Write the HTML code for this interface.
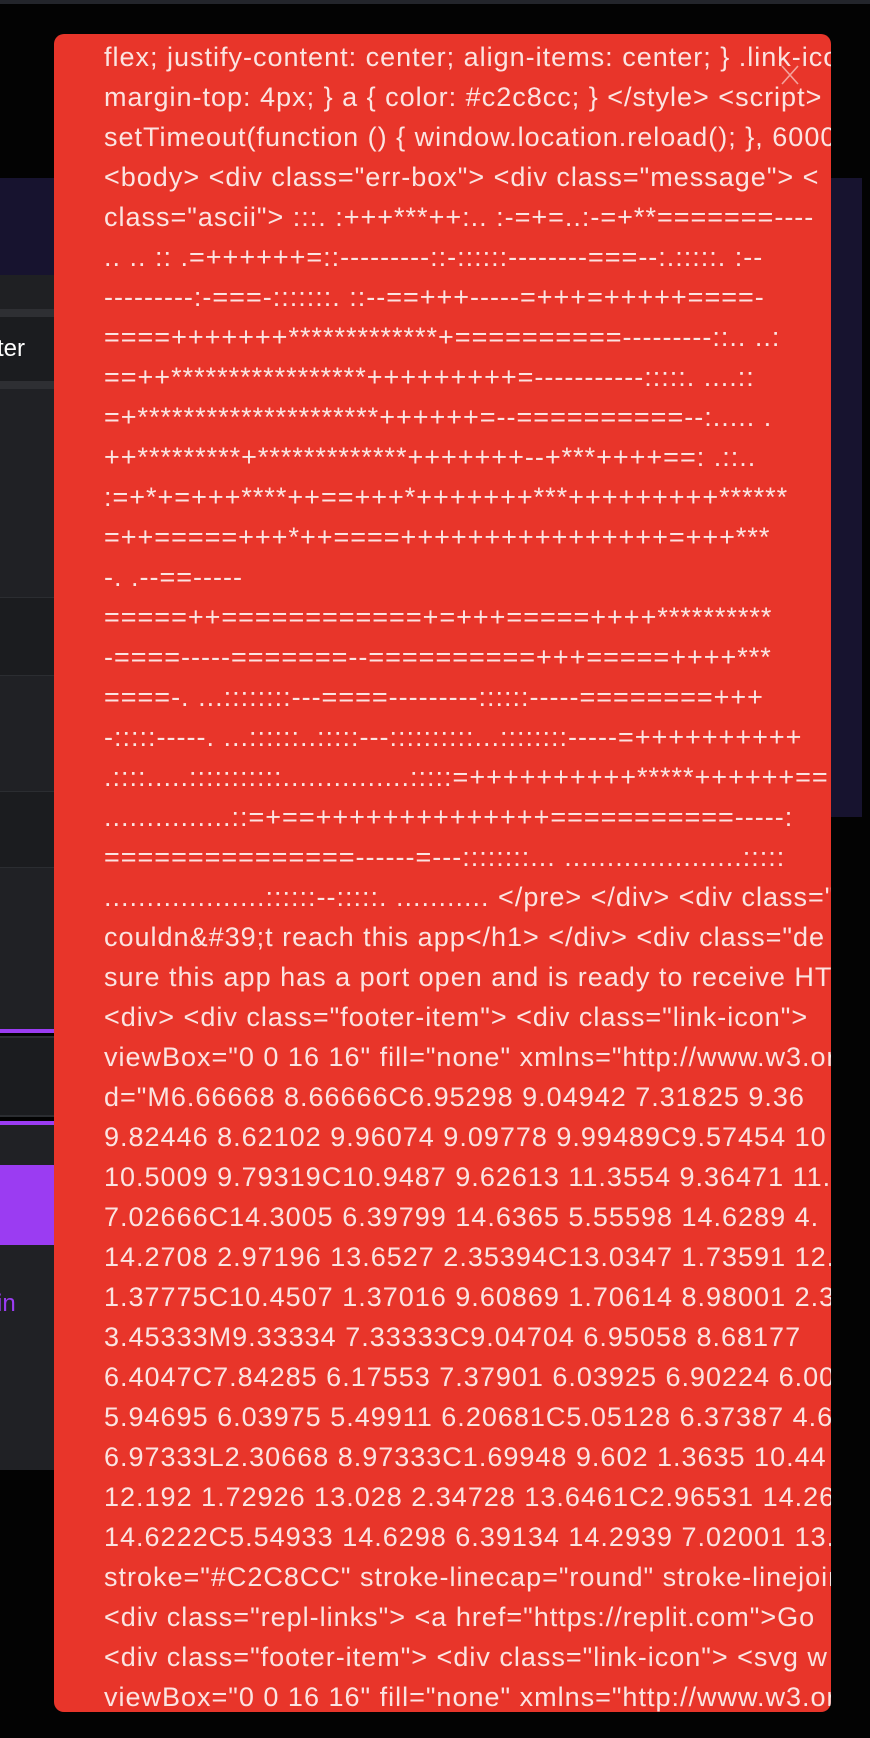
<!DOCTYPE html>
<html><head><meta charset="utf-8"><style>
html,body{margin:0;padding:0;width:870px;height:1738px;background:#030303;overflow:hidden;position:relative;font-family:"Liberation Sans",sans-serif}
.a{position:absolute}
.box{position:absolute;left:54px;top:34px;width:777px;height:1678px;background:#e8352a;border-radius:10px;overflow:hidden}
.ln{position:absolute;left:50px;width:727px;white-space:nowrap;overflow:hidden;color:#fbe4e1;font-size:27px;line-height:40px;letter-spacing:1px}
.x{position:absolute;left:726px;top:30px}
</style></head><body>
<div class="a" style="left:0;top:0;width:870px;height:4px;background:#23252b"></div>
<div class="a" style="left:0;top:178px;width:862px;height:97px;background:#17132f"></div>
<div class="a" style="left:831px;top:178px;width:31px;height:639px;background:#17132f"></div>
<div class="a" style="left:0;top:275px;width:54px;height:34px;background:#1f2023"></div>
<div class="a" style="left:0;top:309px;width:54px;height:8px;background:#2e2f33"></div>
<div class="a" style="left:0;top:317px;width:54px;height:64px;background:#1b1c1f"></div>
<div class="a" style="left:-3px;top:333px;color:#fff;font-size:24px;line-height:32px">ter</div>
<div class="a" style="left:0;top:381px;width:54px;height:8px;background:#2e2f33"></div>
<div class="a" style="left:0;top:389px;width:54px;height:208px;background:#202125"></div>
<div class="a" style="left:0;top:597px;width:54px;height:1px;background:#2b2d31"></div>
<div class="a" style="left:0;top:598px;width:54px;height:77px;background:#1b1c1f"></div>
<div class="a" style="left:0;top:675px;width:54px;height:1px;background:#2b2d31"></div>
<div class="a" style="left:0;top:676px;width:54px;height:115px;background:#202125"></div>
<div class="a" style="left:0;top:791px;width:54px;height:1px;background:#2b2d31"></div>
<div class="a" style="left:0;top:792px;width:54px;height:75px;background:#1b1c1f"></div>
<div class="a" style="left:0;top:867px;width:54px;height:1px;background:#2b2d31"></div>
<div class="a" style="left:0;top:868px;width:54px;height:161px;background:#202125"></div>
<div class="a" style="left:0;top:1029px;width:54px;height:4px;background:#9b3cf2"></div>
<div class="a" style="left:0;top:1036px;width:54px;height:2px;background:#2b2d31"></div>
<div class="a" style="left:0;top:1038px;width:54px;height:77px;background:#1b1c1f"></div>
<div class="a" style="left:0;top:1115px;width:54px;height:2px;background:#2b2d31"></div>
<div class="a" style="left:0;top:1121px;width:54px;height:4px;background:#9b3cf2"></div>
<div class="a" style="left:0;top:1125px;width:54px;height:40px;background:#202125"></div>
<div class="a" style="left:0;top:1165px;width:54px;height:80px;background:#9b3cf2"></div>
<div class="a" style="left:0;top:1245px;width:54px;height:225px;background:#202125"></div>
<div class="a" style="left:-3px;top:1288px;color:#9b3cf2;font-size:24px;line-height:32px">in</div>
<div class="box">
<div class="ln" style="top:3px">flex; justify-content: center; align-items: center; } .link-icon</div>
<div class="ln" style="top:43px">margin-top: 4px; } a { color: #c2c8cc; } &lt;/style&gt; &lt;script&gt;</div>
<div class="ln" style="top:83px">setTimeout(function () { window.location.reload(); }, 6000</div>
<div class="ln" style="top:123px">&lt;body&gt; &lt;div class="err-box"&gt; &lt;div class="message"&gt; &lt;</div>
<div class="ln" style="top:163px">class="ascii"&gt; :::. :+++***++:.. :-=+=..:-=+**=======----</div>
<div class="ln" style="top:203px">.. .. :: .=++++++=::---------::-::::::--------===--:.:::::. :--</div>
<div class="ln" style="top:243px">---------:-===-:::::::. ::--==+++-----=+++=+++++====-</div>
<div class="ln" style="top:283px">====+++++++*************+==========---------::.. ..:</div>
<div class="ln" style="top:323px">==++*****************+++++++++=-----------:::::. ....::</div>
<div class="ln" style="top:363px">=+*********************++++++=--==========--:..... .</div>
<div class="ln" style="top:403px">++*********+*************+++++++--+***++++==: .::..</div>
<div class="ln" style="top:443px">:=+*+=+++****++==+++*+++++++***+++++++++******</div>
<div class="ln" style="top:483px">=++=====+++*++====++++++++++++++++=+++***</div>
<div class="ln" style="top:523px">-. .--==-----</div>
<div class="ln" style="top:563px">=====++============+=+++=====++++**********</div>
<div class="ln" style="top:603px">-====-----=======--==========+++=====++++***</div>
<div class="ln" style="top:643px">====-. ...::::::::---====---------::::::-----========+++</div>
<div class="ln" style="top:683px">-:::::-----. ...::::::..:::::---::::::::::...::::::::-----=++++++++++</div>
<div class="ln" style="top:723px">.::::.....:::::::::::...............:::::=++++++++++*****++++++==</div>
<div class="ln" style="top:763px">...............::=+==++++++++++++++===========-----:</div>
<div class="ln" style="top:803px">===============------=---::::::::... .....................:::::</div>
<div class="ln" style="top:843px">...................::::::--:::::. ........... &lt;/pre&gt; &lt;/div&gt; &lt;div class="</div>
<div class="ln" style="top:883px">couldn&amp;#39;t reach this app&lt;/h1&gt; &lt;/div&gt; &lt;div class="de</div>
<div class="ln" style="top:923px">sure this app has a port open and is ready to receive HTTP</div>
<div class="ln" style="top:963px">&lt;div&gt; &lt;div class="footer-item"&gt; &lt;div class="link-icon"&gt;</div>
<div class="ln" style="top:1003px">viewBox="0 0 16 16" fill="none" xmlns="http://www.w3.org</div>
<div class="ln" style="top:1043px">d="M6.66668 8.66666C6.95298 9.04942 7.31825 9.36</div>
<div class="ln" style="top:1083px">9.82446 8.62102 9.96074 9.09778 9.99489C9.57454 10</div>
<div class="ln" style="top:1123px">10.5009 9.79319C10.9487 9.62613 11.3554 9.36471 11.6</div>
<div class="ln" style="top:1163px">7.02666C14.3005 6.39799 14.6365 5.55598 14.6289 4.</div>
<div class="ln" style="top:1203px">14.2708 2.97196 13.6527 2.35394C13.0347 1.73591 12.1</div>
<div class="ln" style="top:1243px">1.37775C10.4507 1.37016 9.60869 1.70614 8.98001 2.31</div>
<div class="ln" style="top:1283px">3.45333M9.33334 7.33333C9.04704 6.95058 8.68177</div>
<div class="ln" style="top:1323px">6.4047C7.84285 6.17553 7.37901 6.03925 6.90224 6.00</div>
<div class="ln" style="top:1363px">5.94695 6.03975 5.49911 6.20681C5.05128 6.37387 4.6</div>
<div class="ln" style="top:1403px">6.97333L2.30668 8.97333C1.69948 9.602 1.3635 10.44</div>
<div class="ln" style="top:1443px">12.192 1.72926 13.028 2.34728 13.6461C2.96531 14.264</div>
<div class="ln" style="top:1483px">14.6222C5.54933 14.6298 6.39134 14.2939 7.02001 13.</div>
<div class="ln" style="top:1523px">stroke="#C2C8CC" stroke-linecap="round" stroke-linejoin</div>
<div class="ln" style="top:1563px">&lt;div class="repl-links"&gt; &lt;a href="https://replit.com"&gt;Go</div>
<div class="ln" style="top:1603px">&lt;div class="footer-item"&gt; &lt;div class="link-icon"&gt; &lt;svg w</div>
<div class="ln" style="top:1643px">viewBox="0 0 16 16" fill="none" xmlns="http://www.w3.org</div>
<svg class="x" width="20" height="22" viewBox="0 0 20 22"><path d="M2 2L18 20M18 2L2 20" stroke="#f3a39c" stroke-width="1.6" fill="none"/></svg>
</div>
</body></html>
